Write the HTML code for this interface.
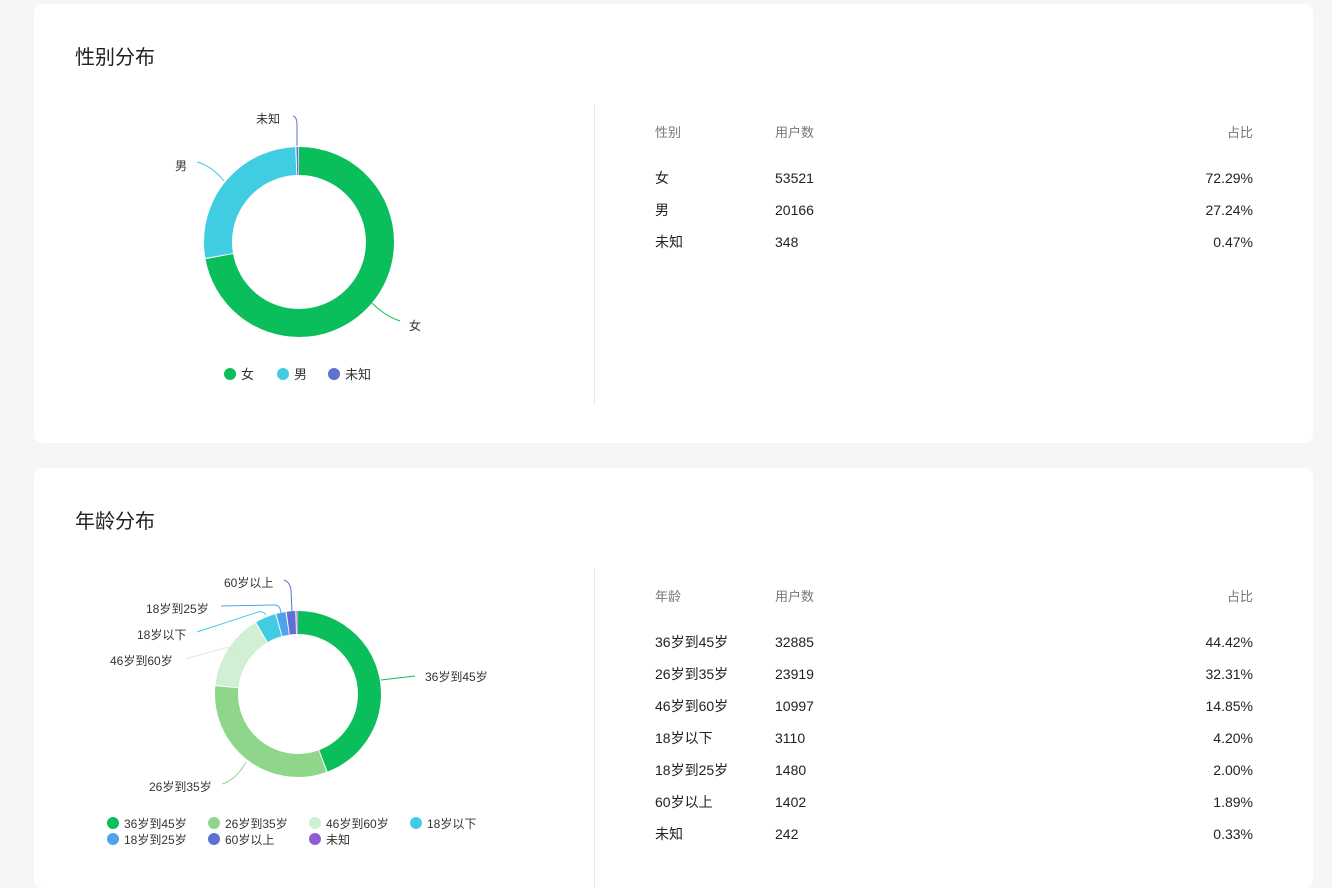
<!DOCTYPE html><html><head><meta charset="utf-8"><style>
body{margin:0;background:#f5f6f8;width:1332px;height:867px;overflow:hidden;font-family:"Liberation Sans","Noto Sans CJK SC",sans-serif;color:#222}
.card{position:absolute;left:34px;width:1279px;background:#fff;border-radius:8px}
.t{position:absolute;left:41px;font-size:20px;color:#222}
.div{position:absolute;left:560px;width:1px;background:#e6e6e6}
.tb{position:absolute;left:621px;width:598px;font-size:14px}
.r{position:absolute;left:0;width:598px;height:20px;line-height:20px}
.r span{position:absolute}
.r .a{left:0}.r .b{left:120px}.r .c{right:0}
.h{color:#777;font-size:13px}
svg{position:absolute;left:0;top:0}
svg text{font-size:12px;fill:#333;font-family:"Liberation Sans","Noto Sans CJK SC",sans-serif}
</style></head><body>
<div class="card" style="top:4px;height:439px">
<div class="t" style="top:37px">性别分布</div>
<div class="div" style="top:100px;height:300px"></div>
<div class="tb" style="top:119px">
<div class="r h" style="top:0"><span class="a">性别</span><span class="b">用户数</span><span class="c">占比</span></div>
<div class="r" style="top:45px"><span class="a">女</span><span class="b">53521</span><span class="c">72.29%</span></div>
<div class="r" style="top:77px"><span class="a">男</span><span class="b">20166</span><span class="c">27.24%</span></div>
<div class="r" style="top:109px"><span class="a">未知</span><span class="b">348</span><span class="c">0.47%</span></div>
</div></div>
<div class="card" style="top:468px;height:420px">
<div class="t" style="top:37px">年龄分布</div>
<div class="div" style="top:100px;height:320px"></div>
<div class="tb" style="top:119px">
<div class="r h" style="top:0"><span class="a">年龄</span><span class="b">用户数</span><span class="c">占比</span></div>
<div class="r" style="top:45px"><span class="a">36岁到45岁</span><span class="b">32885</span><span class="c">44.42%</span></div>
<div class="r" style="top:77px"><span class="a">26岁到35岁</span><span class="b">23919</span><span class="c">32.31%</span></div>
<div class="r" style="top:109px"><span class="a">46岁到60岁</span><span class="b">10997</span><span class="c">14.85%</span></div>
<div class="r" style="top:141px"><span class="a">18岁以下</span><span class="b">3110</span><span class="c">4.20%</span></div>
<div class="r" style="top:173px"><span class="a">18岁到25岁</span><span class="b">1480</span><span class="c">2.00%</span></div>
<div class="r" style="top:205px"><span class="a">60岁以上</span><span class="b">1402</span><span class="c">1.89%</span></div>
<div class="r" style="top:237px"><span class="a">未知</span><span class="b">242</span><span class="c">0.33%</span></div>
</div></div>
<svg width="1332" height="867">
<g transform="translate(299,242) rotate(-90)" fill="none" stroke-width="28">
<circle r="81" stroke="#0abf5b" stroke-dasharray="366.9 600"/>
<circle r="81" stroke="#40cde2" stroke-dasharray="137.6 600" stroke-dashoffset="-367.9"/>
<circle r="81" stroke="#5e71d0" stroke-dasharray="1.6 600" stroke-dashoffset="-506.5"/>
</g>
<path d="M372 303 Q385 316 400 321" stroke="#0abf5b" fill="none"/>
<path d="M224 181 Q212 166 197 162" stroke="#40cde2" fill="none"/>
<path d="M297 146 L297 125 Q297 117 293 116" stroke="#5e71d0" fill="none"/>
<text x="409" y="330">女</text><text x="175" y="170">男</text><text x="256" y="123">未知</text>
<circle cx="230" cy="374" r="6" fill="#0abf5b"/><text x="241" y="379" style="font-size:13px">女</text>
<circle cx="283" cy="374" r="6" fill="#40cde2"/><text x="294" y="379" style="font-size:13px">男</text>
<circle cx="334" cy="374" r="6" fill="#5e71d0"/><text x="345" y="379" style="font-size:13px">未知</text>
<g transform="translate(298,694) rotate(-90)" fill="none" stroke-width="23">
<circle r="71.5" stroke="#0abf5b" stroke-dasharray="198.5 600"/>
<circle r="71.5" stroke="#8fd68b" stroke-dasharray="144.1 600" stroke-dashoffset="-199.5"/>
<circle r="71.5" stroke="#d0efd3" stroke-dasharray="65.7 600" stroke-dashoffset="-344.6"/>
<circle r="71.5" stroke="#40cde2" stroke-dasharray="17.9 600" stroke-dashoffset="-411.3"/>
<circle r="71.5" stroke="#4ea4ec" stroke-dasharray="8 600" stroke-dashoffset="-430.2"/>
<circle r="71.5" stroke="#5e71d0" stroke-dasharray="7.5 600" stroke-dashoffset="-439.2"/>
<circle r="71.5" stroke="#8c5fcf" stroke-dasharray="1 600" stroke-dashoffset="-447.7"/>
</g>
<path d="M381 680 L415 676" stroke="#0abf5b" fill="none"/>
<path d="M246 762 Q236 780 222 784" stroke="#8fd68b" fill="none"/>
<path d="M226 657 Q238 646 225 648 L185 659" stroke="#d0efd3" fill="none"/>
<path d="M266 615 Q264 611 258 612 L197 632" stroke="#40cde2" fill="none"/>
<path d="M281 613 Q280 605 275 605 L221 606" stroke="#4ea4ec" fill="none"/>
<path d="M292 612 L291 590 Q290 582 284 580" stroke="#5e71d0" fill="none"/>
<text x="425" y="681">36岁到45岁</text><text x="149" y="791">26岁到35岁</text>
<text x="110" y="665">46岁到60岁</text><text x="137" y="639">18岁以下</text>
<text x="146" y="613">18岁到25岁</text><text x="224" y="587">60岁以上</text>
<g style="font-size:12px">
<circle cx="113" cy="823" r="6" fill="#0abf5b"/><text x="124" y="828">36岁到45岁</text>
<circle cx="214" cy="823" r="6" fill="#8fd68b"/><text x="225" y="828">26岁到35岁</text>
<circle cx="315" cy="823" r="6" fill="#d0efd3"/><text x="326" y="828">46岁到60岁</text>
<circle cx="416" cy="823" r="6" fill="#40cde2"/><text x="427" y="828">18岁以下</text>
<circle cx="113" cy="839" r="6" fill="#4ea4ec"/><text x="124" y="844">18岁到25岁</text>
<circle cx="214" cy="839" r="6" fill="#5e71d0"/><text x="225" y="844">60岁以上</text>
<circle cx="315" cy="839" r="6" fill="#8c5fcf"/><text x="326" y="844">未知</text>
</g>
</svg>
</body></html>
